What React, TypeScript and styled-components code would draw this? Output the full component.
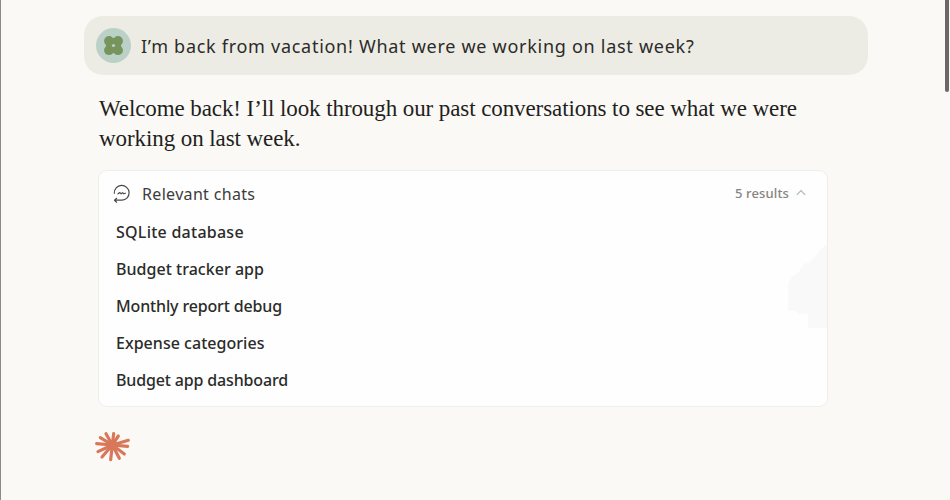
import React from "react";
import styled, { createGlobalStyle } from "styled-components";

const GlobalStyle = createGlobalStyle`
  * { box-sizing: border-box; }
  body { margin: 0; background: #faf9f5; overflow: hidden; }
`;

const sans = `"Noto Sans", "Open Sans", sans-serif`;

const Page = styled.main`
  position: relative;
  height: 500px;
  padding: 16px 82px 0 83px;
  border-left: 1px solid #8b8a88;
  background: #faf9f5;
  overflow: hidden;
  font-family: ${sans};
  color: #2b2b29;
`;

const ScrollThumb = styled.div`
  position: absolute;
  top: -6px;
  right: 1px;
  width: 4px;
  height: 98px;
  border-radius: 2px;
  background: #6a6967;
`;

const UserMessage = styled.section`
  display: flex;
  align-items: center;
  gap: 10px;
  height: 59px;
  padding-left: 12px;
  border-radius: 19px;
  background: #edece4;
`;

const Text = styled.span<{ $size: number; $spacing: number; $weight?: number }>`
  font-size: ${(p) => p.$size}px;
  font-weight: ${(p) => p.$weight ?? 500};
  letter-spacing: ${(p) => p.$spacing}px;
  white-space: nowrap;
`;

const Reply = styled.p`
  margin: 19px 0 0 15px;
  font-family: "Liberation Serif", serif;
  font-size: 23px;
  line-height: 30px;
  color: #1f1f1d;
`;

const ReplyLine = styled.span<{ $spacing: number }>`
  display: block;
  width: max-content;
  letter-spacing: ${(p) => p.$spacing}px;
`;

const Card = styled.section`
  position: relative;
  width: 730px;
  height: 237px;
  margin: 16px 0 0 14px;
  border: 1px solid #efeeea;
  border-radius: 9px;
  background: #fefefe;
`;

const CardHeader = styled.header`
  display: flex;
  align-items: center;
  height: 42px;
  padding: 3px 21px 0 14px;
  color: #3c3c3a;
`;

const Title = styled.div`
  flex: 1;
  display: flex;
  margin-left: 11px;
`;

const Count = styled.div`
  display: flex;
  align-items: center;
  gap: 7px;
  margin-top: -2px;
  color: #85847f;
`;

const Results = styled.ul`
  margin: 0;
  padding: 0 0 0 17px;
  list-style: none;
`;

const Result = styled.li`
  display: flex;
  align-items: center;
  height: 37px;
`;

const Shade = styled.svg`
  position: absolute;
  right: 0;
  top: 73px;
`;

const Spark = styled.svg`
  display: block;
  margin: 13px 0 0 1px;
`;

const chats = [
  { name: "SQLite database", spacing: 0.25 },
  { name: "Budget tracker app", spacing: 0.03 },
  { name: "Monthly report debug", spacing: -0.15 },
  { name: "Expense categories", spacing: 0.03 },
  { name: "Budget app dashboard", spacing: -0.15 },
];

const rays = [
  [63, 41], [86, 41], [100, 48], [130, 61], [128, 79], [118, 102],
  [103, 115], [77, 119], [51, 111], [39, 95], [35, 71], [46, 53],
];

const Avatar = () => (
  <svg width="35" height="35" viewBox="0 0 35 35">
    <circle cx="17.5" cy="17.5" r="17.5" fill="#bbd1c8" />
    <g fill="#78945d">
      <circle cx="13" cy="13" r="4.9" />
      <circle cx="22" cy="13" r="4.9" />
      <circle cx="13" cy="22.2" r="4.9" />
      <circle cx="22" cy="22.2" r="4.9" />
      <rect x="10" y="12" width="15" height="11" />
      <rect x="12" y="10" width="11" height="15" />
    </g>
    <circle cx="17.5" cy="17.5" r="1.6" fill="#bbd1c8" />
  </svg>
);

const ChatIcon = () => (
  <svg width="18" height="20" viewBox="0 0 18 20" fill="none" stroke="#4a4a48" strokeWidth="1.2" strokeLinecap="round" strokeLinejoin="round">
    <path d="M1.3 9.2A7.4 7.4 0 1 1 9 16.2H1.6M3.6 14.3 1.5 16.2l2.1 2" />
    <path d="M5 9.8 6.8 8.6l1.3 1.2 1.5-1.2 1.2 1.2 1.6-.6" />
  </svg>
);

export default function App() {
  return (
    <>
      <GlobalStyle />
      <Page>
        <ScrollThumb />
        <UserMessage>
          <Avatar />
          <Text $size={18} $spacing={0.72} $weight={400}>I’m back from vacation! What were we working on last week?</Text>
        </UserMessage>
        <Reply>
          <ReplyLine $spacing={-0.09}>Welcome back! I’ll look through our past conversations to see what we were</ReplyLine>
          <ReplyLine $spacing={-0.08}>working on last week.</ReplyLine>
        </Reply>
        <Card>
          <Shade width="39" height="84" viewBox="0 0 39 84">
            <path d="M39 0 33 5 28 12 22 18 16 20 10 29 4 32 0 40V67H8L12 70H20V84H39Z" fill="#f9f9f9" />
          </Shade>
          <CardHeader>
            <ChatIcon />
            <Title><Text $size={16} $spacing={0.33} $weight={400}>Relevant chats</Text></Title>
            <Count>
              <Text $size={13} $spacing={0.13}>5 results</Text>
              <svg width="10" height="7" viewBox="0 0 10 7" fill="none" stroke="#b5b4b0" strokeWidth="1.1">
                <path d="M.8 5.8 5 1.5l4.2 4.3" />
              </svg>
            </Count>
          </CardHeader>
          <Results>
            {chats.map((c) => (
              <Result key={c.name}><Text $size={16} $spacing={c.spacing}>{c.name}</Text></Result>
            ))}
          </Results>
        </Card>
        <Spark width="60" height="50" viewBox="0 0 180 150" stroke="#d9775a" strokeWidth="9.5" strokeLinecap="round">
          {rays.map(([x, y]) => (
            <line key={`${x}-${y}`} x1="82" y1="75" x2={x} y2={y} />
          ))}
          <circle cx="82" cy="75" r="15" fill="#d9775a" stroke="none" />
        </Spark>
      </Page>
    </>
  );
}
